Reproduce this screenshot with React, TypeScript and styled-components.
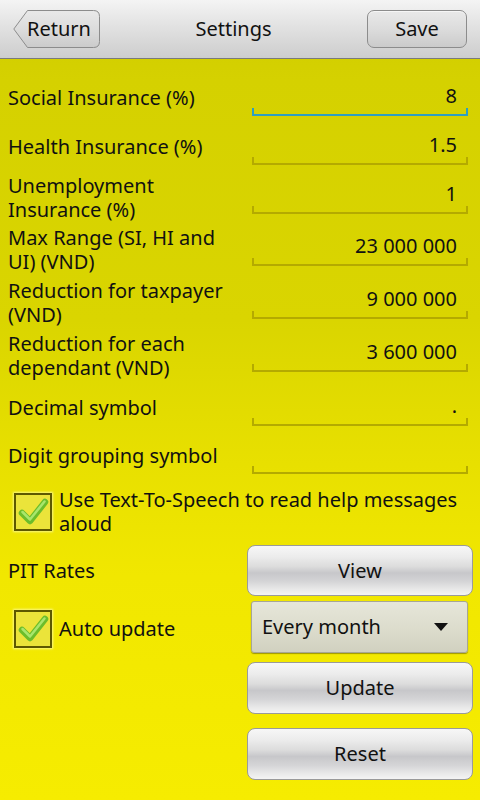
import React from "react";
import styled, { createGlobalStyle } from "styled-components";

const Global = createGlobalStyle`
  html, body { margin: 0; padding: 0; }
  body { background: #f3e900; font-family: "Noto Sans", "Open Sans", sans-serif; }
  #root { width: 480px; height: 800px; }
  * { box-sizing: border-box; }
`;

const Screen = styled.div`
  width: 480px;
  height: 800px;
  overflow: hidden;
  display: flex;
  flex-direction: column;
  color: #111;
  font-family: "Noto Sans", "Open Sans", sans-serif;
  font-size: 20px;
  background: linear-gradient(
    180deg,
    #cfcb00 0%,
    #d5d100 10%,
    #dad500 40%,
    #e8e000 58%,
    #f1e700 72%,
    #f6ec00 100%
  );
`;

const Header = styled.header`
  height: 59px;
  flex: none;
  display: flex;
  align-items: center;
  padding: 0 13px 1px 13px;
  background: linear-gradient(180deg, #f4f4f4 0%, #e2e2e2 45%, #cdcdcd 100%);
  border-bottom: 1px solid #7a7a7a;
`;

const BackButton = styled.button`
  position: relative;
  width: 87px;
  height: 38px;
  padding: 0 0 0 5px;
  border: none;
  background: none;
  font: inherit;
  color: #111;
  display: flex;
  align-items: center;
  justify-content: center;
`;

const BackShape = styled.svg`
  position: absolute;
  inset: 0;
  z-index: 0;
`;

const BackLabel = styled.span`
  position: relative;
  z-index: 1;
  line-height: 24px;
`;

const Title = styled.h1`
  flex: 1;
  margin: 0;
  text-align: center;
  font-size: 20px;
  font-weight: normal;
  line-height: 24px;
`;

const HeaderButton = styled.button`
  width: 100px;
  height: 38px;
  border: 1px solid #8c8c8c;
  border-radius: 7px;
  background: linear-gradient(180deg, #e9e9e9 0%, #dcdcdc 50%, #cbcbcb 100%);
  box-shadow: inset 0 1px 0 #f6f6f6;
  font: inherit;
  color: #111;
  line-height: 24px;
  padding: 0;
`;

const Content = styled.main`
  flex: 1;
  padding: 15px 7px 0 8px;
  display: flex;
  flex-direction: column;
`;

const FieldRow = styled.div<{ $mt: number }>`
  display: grid;
  grid-template-columns: 1fr 216px;
  column-gap: 12px;
  align-items: center;
  min-height: 48px;
  margin: ${(p) => p.$mt}px 5px 0 0;
`;

const Label = styled.div`
  font-size: 20px;
  line-height: 24px;
`;

const Field = styled.div<{ $focused?: boolean; $mb: number }>`
  position: relative;
  height: 38px;
  margin-bottom: ${(p) => p.$mb}px;
  padding: 0 11px 2px 0;
  display: flex;
  align-items: center;
  justify-content: flex-end;
  font-size: 20px;
  line-height: 24px;

  &::after {
    content: "";
    position: absolute;
    left: 0;
    right: 0;
    bottom: 0;
    height: 6px;
    border: 2px solid ${(p) => (p.$focused ? "#2f9ec0" : "#b4aa00")};
    border-top: none;
  }
`;

const CheckRow = styled.label<{ $mt: number }>`
  display: flex;
  align-items: center;
  gap: 7px;
  margin-top: ${(p) => p.$mt}px;
  font-size: 20px;
  line-height: 24px;
`;

const Box = styled.span`
  flex: none;
  width: 38px;
  height: 38px;
  margin-left: 6px;
  border: 2px solid #5d5800;
  background: #ebe43a;
  box-shadow: 0 0 2px 1px rgba(255, 255, 190, 0.7);
  display: flex;
  align-items: center;
  justify-content: center;
`;

const Actions = styled.div`
  display: grid;
  grid-template-columns: 1fr 226px;
  margin-top: 9px;
`;

const SideLabel = styled.div`
  grid-column: 1;
  align-self: center;
  font-size: 20px;
  line-height: 24px;
`;

const ActionButton = styled.button<{ $h: number; $mt: number }>`
  grid-column: 2;
  height: ${(p) => p.$h}px;
  margin-top: ${(p) => p.$mt}px;
  border: 1px solid #9a9a9a;
  border-radius: 8px;
  background: linear-gradient(
    180deg,
    #f7f7f7 0%,
    #ececec 22%,
    #dcdcdc 42%,
    #c7c7ca 55%,
    #d4d4d6 72%,
    #e8e8e8 88%,
    #f4f4f4 100%
  );
  font: inherit;
  color: #111;
  line-height: 24px;
  padding: 0;
`;

const AutoRow = styled(CheckRow)`
  grid-column: 1;
  align-self: center;
`;

const Spinner = styled.div`
  grid-column: 2;
  height: 52px;
  margin: 5px 5px 0 4px;
  border: 1px solid #a6a696;
  border-radius: 3px;
  background: linear-gradient(180deg, #e6e6d9 0%, #dcdccc 55%, #d1d1c0 100%);
  box-shadow: 0 1px 1px rgba(0, 0, 0, 0.35);
  display: flex;
  align-items: center;
  justify-content: space-between;
  padding: 0 19px 0 10px;
  font-size: 20px;
  line-height: 24px;
`;

const CheckMark = () => (
  <svg width="34" height="34" viewBox="0 0 34 34">
    <polyline
      points="6,18 14,26 29,7"
      fill="none"
      stroke="#6cbd2a"
      strokeWidth="6.5"
      strokeLinecap="round"
      strokeLinejoin="round"
    />
    <polyline
      points="6.5,17 14,24.5 28.5,6.5"
      fill="none"
      stroke="#a8e66c"
      strokeWidth="2.5"
      strokeLinecap="round"
      strokeLinejoin="round"
    />
  </svg>
);

const fields: { label: string; value: string; mt: number; two?: boolean; focused?: boolean }[] = [
  { label: "Social Insurance (%)", value: "8", mt: 0, focused: true },
  { label: "Health Insurance (%)", value: "1.5", mt: 1 },
  { label: "Unemployment Insurance (%)", value: "1", mt: 3, two: true },
  { label: "Max Range (SI, HI and UI) (VND)", value: "23 000 000", mt: 4, two: true },
  { label: "Reduction for taxpayer (VND)", value: "9 000 000", mt: 5, two: true },
  { label: "Reduction for each dependant (VND)", value: "3 600 000", mt: 5, two: true },
  { label: "Decimal symbol", value: ".", mt: 4 },
  { label: "Digit grouping symbol", value: "", mt: 0 },
];

export default function App() {
  return (
    <Screen>
      <Global />
      <Header>
        <BackButton>
          <BackShape width="87" height="38" viewBox="0 0 87 38">
            <defs>
              <linearGradient id="bk" x1="0" y1="0" x2="0" y2="1">
                <stop offset="0" stopColor="#e9e9e9" />
                <stop offset="0.5" stopColor="#dcdcdc" />
                <stop offset="1" stopColor="#cbcbcb" />
              </linearGradient>
            </defs>
            <path
              d="M14.5 0.5 H80.5 Q86.5 0.5 86.5 6.5 V31.5 Q86.5 37.5 80.5 37.5 H14.5 L0.8 19 Z"
              fill="url(#bk)"
              stroke="#8c8c8c"
            />
          </BackShape>
          <BackLabel>Return</BackLabel>
        </BackButton>
        <Title>Settings</Title>
        <HeaderButton>Save</HeaderButton>
      </Header>
      <Content>
        {fields.map((f, i) => (
          <FieldRow key={i} $mt={f.mt}>
            <Label>{f.label}</Label>
            <Field $focused={f.focused} $mb={f.two ? 6 : 2}>
              {f.value}
            </Field>
          </FieldRow>
        ))}
        <CheckRow $mt={8}>
          <Box>
            <CheckMark />
          </Box>
          <span>Use Text-To-Speech to read help messages aloud</span>
        </CheckRow>
        <Actions>
          <SideLabel>PIT Rates</SideLabel>
          <ActionButton $h={51} $mt={0}>View</ActionButton>
          <AutoRow $mt={9}>
            <Box>
              <CheckMark />
            </Box>
            <span>Auto update</span>
          </AutoRow>
          <Spinner>
            <span>Every month</span>
            <svg width="14" height="8" viewBox="0 0 14 8">
              <polygon points="0,0 14,0 7,8" fill="#111" />
            </svg>
          </Spinner>
          <ActionButton $h={52} $mt={9}>Update</ActionButton>
          <ActionButton $h={52} $mt={14}>Reset</ActionButton>
        </Actions>
      </Content>
    </Screen>
  );
}
